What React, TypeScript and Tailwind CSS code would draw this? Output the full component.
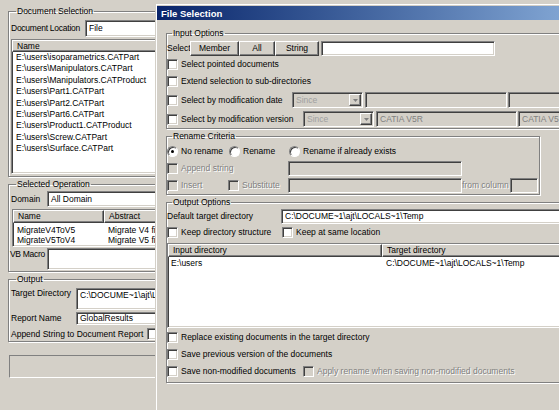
import * as React from 'react';
import { clsx } from 'clsx';

// Classic Windows 2000 look: gray face, sunken fields, raised buttons
const sunken =
  'border border-t-[#808080] border-l-[#808080] border-b-white border-r-white shadow-[inset_1px_1px_0_#404040,inset_-1px_-1px_0_#d4d0c8]';
const raised =
  'border border-t-white border-l-white border-b-[#404040] border-r-[#404040] shadow-[inset_-1px_-1px_0_#808080]';
const disabledText = 'text-[#808080] [text-shadow:1px_1px_0_#fff]';

type FieldProps = {
  className?: string;
  disabled?: boolean;
  children?: React.ReactNode;
};

const Field: React.FC<FieldProps> = ({ className, disabled, children }) => (
  <div
    className={clsx(
      sunken,
      'flex shrink-0 items-center overflow-hidden whitespace-nowrap pl-[3px]',
      disabled ? 'bg-[#d4d0c8] text-[#808080]' : 'bg-white',
      className,
    )}
  >
    {children}
  </div>
);

type CheckBoxProps = {
  label: string;
  disabled?: boolean;
  className?: string;
};

const CheckBox: React.FC<CheckBoxProps> = ({ label, disabled, className }) => (
  <label className={clsx('flex shrink-0 items-center gap-[3px] whitespace-nowrap', className)}>
    <span className={clsx(sunken, 'size-[11px] shrink-0', disabled ? 'bg-[#d4d0c8]' : 'bg-white')} />
    <span className={disabled ? disabledText : undefined}>{label}</span>
  </label>
);

const Radio: React.FC<{ label: string; checked?: boolean; className?: string }> = ({
  label,
  checked,
  className,
}) => (
  <label className={clsx('flex shrink-0 items-center gap-[3px] whitespace-nowrap', className)}>
    <span className="flex size-[11px] shrink-0 items-center justify-center rounded-full border border-t-[#808080] border-l-[#808080] border-b-white border-r-white bg-white shadow-[inset_1px_1px_0_#404040]">
      {checked && <span className="size-[3px] rounded-full bg-black" />}
    </span>
    <span>{label}</span>
  </label>
);

const Combo: React.FC<{ value: string; className?: string }> = ({ value, className }) => (
  <div className={clsx(sunken, 'flex h-full shrink-0 items-stretch bg-[#d4d0c8]', className)}>
    <span className="flex flex-1 items-center pl-[3px] text-[#a0a0a0]">{value}</span>
    <span className={clsx(raised, 'm-px flex w-[12px] items-center justify-center bg-[#d4d0c8]')}>
      <svg width="5" height="3" viewBox="0 0 5 3">
        <path d="M0 0h5L2.5 3z" fill="#808080" />
      </svg>
    </span>
  </div>
);

const Button: React.FC<{ label: string; className?: string }> = ({ label, className }) => (
  <button
    type="button"
    className={clsx(raised, 'flex h-full shrink-0 items-center justify-center bg-[#d4d0c8]', className)}
  >
    {label}
  </button>
);

const HeaderCell: React.FC<{ label: string; className?: string }> = ({ label, className }) => (
  <div className={clsx(raised, 'flex h-full items-center whitespace-nowrap bg-[#d4d0c8] pl-[4px]', className)}>
    {label}
  </div>
);

// Etched group frame: gray line with a white line just inside/below it
const GroupBox: React.FC<{ title: string; className?: string; children: React.ReactNode }> = ({
  title,
  className,
  children,
}) => (
  <fieldset className={clsx('border border-[#808080] shadow-[1px_1px_0_#fff,inset_1px_1px_0_#fff]', className)}>
    <legend className="ml-[5px] px-px leading-[11px]">{title}</legend>
    {children}
  </fieldset>
);

const documents = [
  'E:\\users\\isoparametrics.CATPart',
  'E:\\users\\Manipulators.CATPart',
  'E:\\users\\Manipulators.CATProduct',
  'E:\\users\\Part1.CATPart',
  'E:\\users\\Part2.CATPart',
  'E:\\users\\Part6.CATPart',
  'E:\\users\\Product1.CATProduct',
  'E:\\users\\Screw.CATPart',
  'E:\\users\\Surface.CATPart',
];

const operations = [
  { name: 'MigrateV4ToV5', abstract: 'Migrate V4 files to V5' },
  { name: 'MigrateV5ToV4', abstract: 'Migrate V5 files to V4' },
];

const LeftPanel: React.FC = () => (
  <div className="h-full w-[155px] shrink-0 overflow-hidden">
    <div className="w-[230px] pl-[8px] pt-[6px]">
      <GroupBox title="Document Selection" className="pb-[2px] pl-[2px]">
        <div className="mt-[3px] flex h-[17px] items-center">
          <span className="w-[74px] shrink-0 whitespace-nowrap tracking-[-0.25px]">Document Location</span>
          <Field className="h-full flex-1">File</Field>
        </div>
        <div className={clsx(sunken, 'mt-[2px] h-[135px] bg-white')}>
          <div className="flex h-[12px]">
            <HeaderCell label="Name" className="flex-1" />
          </div>
          <ul className="pl-[4px] leading-[11.4px]">
            {documents.map((doc) => (
              <li key={doc} className="whitespace-nowrap">
                {doc}
              </li>
            ))}
          </ul>
        </div>
      </GroupBox>

      <GroupBox title="Selected Operation" className="mt-[2px] pb-px pl-[2px]">
        <div className="mt-px flex h-[16px] items-center">
          <span className="w-[36px] shrink-0">Domain</span>
          <Field className="h-full flex-1">All Domain</Field>
        </div>
        <div className={clsx(sunken, 'ml-px mt-[2px] h-[38px] bg-white')}>
          <div className="flex h-[13px]">
            <HeaderCell label="Name" className="w-[91px] shrink-0" />
            <HeaderCell label="Abstract" className="flex-1" />
          </div>
          <div className="pt-[1.5px] leading-[10.7px]">
            {operations.map((op) => (
              <div key={op.name} className="flex whitespace-nowrap">
                <span className="w-[91px] shrink-0 pl-[4px]">{op.name}</span>
                <span className="pl-[4px]">{op.abstract}</span>
              </div>
            ))}
          </div>
        </div>
        <div className="mt-px flex h-[22px] items-start">
          <span className="-ml-px w-[37px] shrink-0 whitespace-nowrap pt-px leading-[11px] tracking-[-0.3px]">
            VB Macro
          </span>
          <Field className="h-full flex-1" />
        </div>
      </GroupBox>

      <GroupBox title="Output" className="mt-[2px] pb-px pl-[2px]">
        <div className="mt-[3px] flex h-[22px] items-start">
          <span className="w-[65px] shrink-0 whitespace-nowrap leading-[11px]">Target Directory</span>
          <Field className="h-full flex-1 items-start! pt-px">C:\DOCUME~1\ajt\LOCALS~1\Temp</Field>
        </div>
        <div className="mt-[2px] flex h-[13px] items-center">
          <span className="w-[65px] shrink-0 whitespace-nowrap">Report Name</span>
          <Field className="h-full flex-1">GlobalResults</Field>
        </div>
        <div className="mt-[3px] flex h-[12px] items-center">
          <span className="w-[136px] shrink-0 whitespace-nowrap">Append String to Document Report</span>
          <Field className="h-full flex-1" />
        </div>
      </GroupBox>

      <div className="ml-px mt-[13px] h-[23px] border border-t-[#808080] border-l-[#808080] border-b-white border-r-white" />
    </div>
  </div>
);

const FileSelectionDialog: React.FC = () => (
  <div className="mt-[3px] h-[420px] w-[520px] shrink-0 bg-[#d4d0c8] pl-[2px] pt-[3px] shadow-[inset_1px_1px_0_#d4d0c8,inset_2px_2px_0_#fff]">
    <div className="flex h-[14px] items-center bg-linear-to-r from-[#0a246a] to-[#a6caf0] pl-[4px] text-[9.5px] font-bold text-white">
      File Selection
    </div>

    <div className="pl-[9px] pt-[8px]">
      <GroupBox title="Input Options" className="pb-px">
        <div className="mt-[2px] flex h-[15px] items-center">
          <span className="w-[23px] shrink-0">Select</span>
          <Button label="Member" className="w-[49px]" />
          <Button label="All" className="w-[36px]" />
          <Button label="String" className="w-[44px]" />
          <Field className="ml-[2px] h-full w-[174px]" />
        </div>
        <div className="flex h-[17px] items-center">
          <CheckBox label="Select pointed documents" />
        </div>
        <div className="flex h-[16px] items-center">
          <CheckBox label="Extend selection to sub-directories" />
        </div>
        <div className="mt-[3px] flex h-[16px] items-center">
          <CheckBox label="Select by modification date" className="w-[125px]" />
          <Combo value="Since" className="w-[71px]" />
          <Field disabled className="ml-[2px] h-full w-[142px]" />
          <Field disabled className="ml-px h-full w-[120px]" />
        </div>
        <div className="mt-[3px] flex h-[16px] items-center">
          <CheckBox label="Select by modification version" className="w-[136px]" />
          <Combo value="Since" className="w-[71px]" />
          <Field disabled className="ml-[2px] h-full w-[141px]">
            CATIA V5R
          </Field>
          <Field disabled className="ml-px h-full w-[120px]">
            CATIA V5
          </Field>
        </div>
      </GroupBox>

      <GroupBox title="Rename Criteria" className="mt-[2px] w-[374px] pb-px">
        <div className="mt-px flex h-[16px] items-center">
          <Radio label="No rename" checked className="w-[62px]" />
          <Radio label="Rename" className="w-[60px]" />
          <Radio label="Rename if already exists" />
        </div>
        <div className="mt-[2px] flex h-[15px] items-center">
          <CheckBox label="Append string" disabled className="w-[121px]" />
          <Field disabled className="h-full w-[174px]" />
        </div>
        <div className="mt-[2px] flex h-[15px] items-center">
          <CheckBox label="Insert" disabled className="w-[61px]" />
          <CheckBox label="Substitute" disabled className="w-[60px]" />
          <Field disabled className="h-full w-[174px]" />
          <span className={clsx(disabledText, 'w-[48px] shrink-0 whitespace-nowrap')}>from column</span>
          <Field disabled className="h-full w-[28px]" />
        </div>
      </GroupBox>

      <GroupBox title="Output Options" className="mt-[2px] pb-[2px]">
        <div className="mt-px flex h-[15px] items-center">
          <span className="w-[114px] shrink-0 whitespace-nowrap">Default target directory</span>
          <Field className="h-full flex-1">C:\DOCUME~1\ajt\LOCALS~1\Temp</Field>
        </div>
        <div className="flex h-[17px] items-center">
          <CheckBox label="Keep directory structure" className="w-[115px]" />
          <CheckBox label="Keep at same location" />
        </div>
        <div className={clsx(sunken, 'mt-[2px] h-[85px] bg-white')}>
          <div className="flex h-[13px]">
            <HeaderCell label="Input directory" className="w-[214px] shrink-0" />
            <HeaderCell label="Target directory" className="flex-1" />
          </div>
          <div className="flex whitespace-nowrap pt-px leading-[11px]">
            <span className="w-[214px] shrink-0 pl-[3px]">E:\users</span>
            <span className="pl-[4px]">C:\DOCUME~1\ajt\LOCALS~1\Temp</span>
          </div>
        </div>
        <div className="mt-px flex h-[17px] items-center">
          <CheckBox label="Replace existing documents in the target directory" />
        </div>
        <div className="flex h-[17px] items-center">
          <CheckBox label="Save previous version of the documents" />
        </div>
        <div className="flex h-[17px] items-center">
          <CheckBox label="Save non-modified documents" className="w-[136px]" />
          <CheckBox label="Apply rename when saving non-modified documents" disabled />
        </div>
      </GroupBox>
    </div>
  </div>
);

export default function App() {
  return (
    <div className="flex h-[410px] w-[559px] items-start overflow-hidden bg-[#d4d0c8] font-['Liberation_Sans',Arial,sans-serif] text-[8.5px] leading-[11px] text-black">
      <LeftPanel />
      <FileSelectionDialog />
    </div>
  );
}
